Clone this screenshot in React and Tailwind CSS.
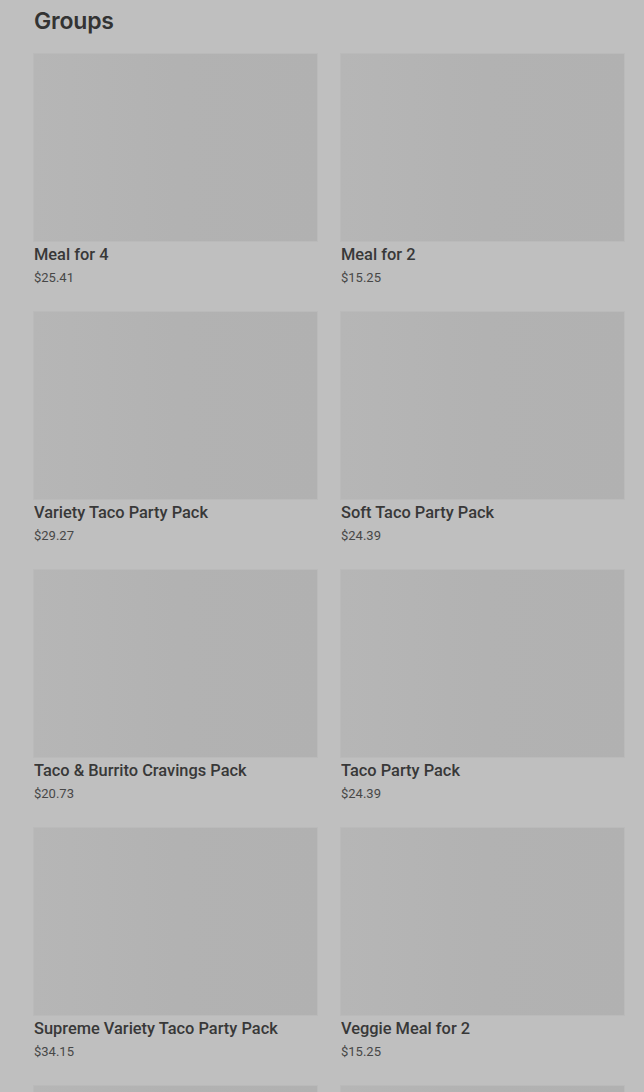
const items = [
  { name: 'Meal for 4', price: '$25.41' },
  { name: 'Meal for 2', price: '$15.25' },
  { name: 'Variety Taco Party Pack', price: '$29.27' },
  { name: 'Soft Taco Party Pack', price: '$24.39' },
  { name: 'Taco & Burrito Cravings Pack', price: '$20.73' },
  { name: 'Taco Party Pack', price: '$24.39' },
  { name: 'Supreme Variety Taco Party Pack', price: '$34.15' },
  { name: 'Veggie Meal for 2', price: '$15.25' },
  { name: 'Burrito Party Pack', price: '$26.83' },
  { name: 'Nachos Party Pack', price: '$21.95' },
]

const ItemCard = ({ item }) => (
  <div className="flex flex-col">
    <div className="h-[187px] w-full bg-gradient-to-r from-[#b6b6b6] via-[#b2b2b2] to-[#b1b1b1] ring-1 ring-[#bababa]" />
    <div className="mt-[2px] text-[16.4px] leading-6 font-medium text-[#383838] truncate">{item.name}</div>
    <div className="text-[13px] leading-[21px] text-[#474747]">{item.price}</div>
  </div>
)

export default function App() {
  return (
    <div className="h-[1092px] w-full bg-[#bfbfbf] pl-[34px] pr-[20px] overflow-hidden" style={{ fontFamily: 'Roboto, "Liberation Sans", sans-serif' }}>
      <h2 className="pt-[7px] mb-[19px] text-[23px] leading-7 font-semibold text-[#333333] tracking-[-0.2px] font-['Inter',sans-serif]">Groups</h2>
      <div className="grid grid-cols-2 gap-x-6 gap-y-6">
        {items.map((item) => (
          <ItemCard key={item.name} item={item} />
        ))}
      </div>
    </div>
  )
}
